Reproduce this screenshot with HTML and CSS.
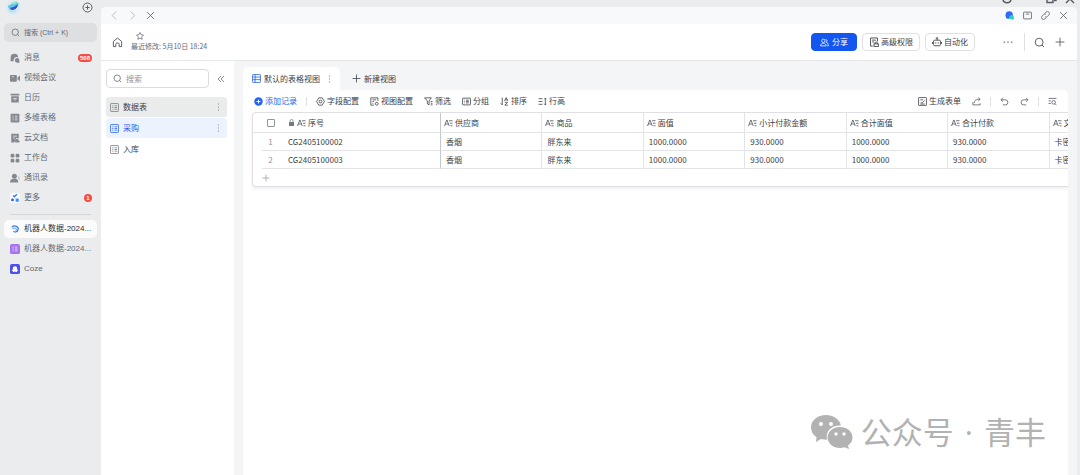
FILE: index.html
```html
<!DOCTYPE html>
<html lang="zh-CN">
<head>
<meta charset="utf-8">
<meta name="viewport" content="width=device-width, initial-scale=1">
<title>机器人数据</title>
<link rel="stylesheet" href="styles.css">
</head>
<body>
<svg class="defs" aria-hidden="true">
  <symbol id="search" viewBox="0 0 16 16"><circle cx="7.5" cy="7.5" r="5.7"/><path d="M11.7 11.7 14.5 14.5"/></symbol>
  <symbol id="plus" viewBox="0 0 16 16"><path d="M8 1v14M1 8h14"/></symbol>
  <symbol id="close" viewBox="0 0 16 16"><path d="m2 2 12 12M14 2 2 14"/></symbol>
  <symbol id="grid" viewBox="0 0 16 16"><rect x="1" y="1" width="14" height="14" rx="1"/><path d="M4 5h2M4 8h2M4 11h2M8 5h4.500M8 8h4.500M8 11h4.500"/></symbol>
  <symbol id="dots" viewBox="0 0 4 16"><path d="M1 2h2M1 8h2M1 14h2" stroke-width="2"/></symbol>
  <symbol id="text" viewBox="0 0 18 16"><path d="M1 14 5.500 2h.5L10.500 14M2.800 10h6M10 3.500h7M12 8.500h5M13 13.500h4"/></symbol>
  <symbol id="undo" viewBox="0 0 16 16"><path d="M5 1.500 2 5l3 3.500M2 5h7.500a4.500 4.500 0 0 1 0 9H5"/></symbol>
</svg>
<div class="app">
  <aside class="sidebar">
    <div class="profile">
      <svg class="avatar" viewBox="0 0 28 28"><circle cx="14" cy="14" r="14" fill="#dcebf3"/><path d="M3 11c6-1 8-6 17-8l4 4c-3 8-9 12-17 12z" fill="#65c9e6"/><path d="M8 14c5 1 9-3 14-6 0 6-4 10-10 11-3-1-4-3-4-5z" fill="#3059cf"/><path d="M3 18c5 3 11 3 17 0-1 6-12 8-17 0z" fill="#b5e0ea"/><path d="m10 7 5-4 7 1-6 4z" fill="#9de2cf"/></svg>
      <button class="icon-btn" aria-label="新建"><svg class="ic i11" viewBox="0 0 16 16"><circle cx="8" cy="8" r="6.500"/><path d="M8 5v6M5 8h6"/></svg></button>
    </div>
    <button class="side-search"><svg class="ic i9"><use href="#search"/></svg><span>搜索 (Ctrl + K)</span></button>
    <nav class="side-nav">
      <a href="#"><svg class="solid" viewBox="0 0 16 16"><path d="M7 1a6 6 0 0 0-6 6v6h5a5 5 0 0 1 7-6 6 6 0 0 0-6-6z"/><path d="M11.500 8a3.700 3.700 0 1 0 0 7.400H15v-4A3.500 3.500 0 0 0 11.500 8z"/></svg><span>消息</span><b class="badge">508</b></a>
      <a href="#"><svg class="solid" viewBox="0 0 16 16"><rect y="3" width="11" height="11" rx="1.500"/><path d="m12 7 4-3v9l-4-3z"/><path class="cut" d="M3 6h3"/></svg><span>视频会议</span></a>
      <a href="#"><svg class="solid" viewBox="0 0 16 16"><path d="M1 1h14v3H1zM2 5h12v10H2z"/><path class="cut" d="M5 9h6M8 9v3"/></svg><span>日历</span></a>
      <a href="#"><svg class="solid" viewBox="0 0 16 16"><rect x="1" y="1" width="14" height="14" rx="1.500"/><path class="cut" d="M4 5h2M4 8h2M4 11h2M8 5h4M8 8h4M8 11h4"/></svg><span>多维表格</span></a>
      <a href="#"><svg class="solid" viewBox="0 0 16 16"><path d="M2 1h12v8l-4-1-3 7H2z"/><path d="M9 15a3 3 0 0 1 1-5c2-1 3 0 4 2 2 0 2 3 0 3z"/><path class="cut" d="M5 5h6M5 8h3"/></svg><span>云文档</span></a>
      <a href="#"><svg class="solid" viewBox="0 0 16 16"><rect x="1" y="1" width="6" height="6" rx="2"/><rect x="9" y="1" width="6" height="6" rx="2"/><rect x="1" y="9" width="6" height="6" rx="2"/><rect x="9" y="9" width="6" height="6" rx="2"/></svg><span>工作台</span></a>
      <a href="#"><svg class="solid" viewBox="0 0 16 16"><circle cx="7" cy="5" r="4"/><path d="M0 15c0-4 2-6 7-6s6 2 6 6zM13 6h2v1h-2zM13 9h3v1h-3z"/></svg><span>通讯录</span></a>
      <a href="#"><svg class="more" viewBox="0 0 16 16"><rect width="16" height="16" rx="3" fill="#f8fafc"/><path d="m5 4 2 2 4-4" fill="none" stroke="#3476ef" stroke-width="2"/><circle cx="4" cy="11" r="2.300" fill="#2861ef"/><rect x="9" y="9" width="5" height="5" fill="#3b91f5"/></svg><span>更多</span><b class="badge">1</b></a>
    </nav>
    <hr class="side-rule">
    <nav class="side-nav">
      <a href="#" class="active"><svg viewBox="0 0 16 16" fill="none" stroke-width="2"><path d="M3 5c4-4 11-1 10 4s-7 4-7 2" stroke="#3671e7"/><path d="M4 8c2-2 5-2 6 0s-1 4-3 4" stroke="#8cb5f5"/></svg><span>机器人数据-2024...</span></a>
      <a href="#"><svg viewBox="0 0 16 16"><rect width="16" height="16" rx="3" fill="#a873ee"/><path d="M4 5h2M4 8h2M4 11h2M8 5h4M8 8h4M8 11h4" stroke="#ead9fc" stroke-width="1.500"/></svg><span>机器人数据-2024...</span></a>
      <a href="#"><svg viewBox="0 0 16 16"><rect width="16" height="16" rx="3" fill="#4d53e8"/><path d="M4.500 7a3.500 3.500 0 0 1 7 0v2l2 1-2 1c0 2-2 2-3.500 1-1.500 1-3.500 1-3.500-1l-2-1 2-1z" fill="#fff"/></svg><span>Coze</span></a>
    </nav>
  </aside>

  <div class="workspace">
    <div class="titlebar">
      <svg class="ic" viewBox="0 0 12 4"><path d="M2-1c0 5 8 5 8 0"/></svg>
      <svg class="ic" viewBox="0 0 12 4"><path d="M2-4v6.500h6v-7M9 .5h2v-4"/></svg>
      <svg class="ic" viewBox="0 0 12 4"><path d="m6-1-4 4M6-1l4 4"/></svg>
    </div>
    <main class="window">
      <div class="tabstrip">
        <button class="icon-btn faint" aria-label="后退"><svg class="ic i9" viewBox="0 0 16 16"><path d="m11 1-7 7 7 7"/></svg></button>
        <button class="icon-btn faint" aria-label="前进"><svg class="ic i9" viewBox="0 0 16 16"><path d="m5 1 7 7-7 7"/></svg></button>
        <button class="icon-btn" aria-label="关闭标签"><svg class="ic i9"><use href="#close"/></svg></button>
        <span class="grow"></span>
        <div class="strip-tools">
          <button class="icon-btn" aria-label="助手"><svg class="i9" viewBox="0 0 16 16"><circle cx="7.500" cy="7" r="6.500" fill="#2f6bf5"/><path d="M1 7h6v6.500H2.500z" fill="#2f6bf5"/><path d="M12 7.500a3.800 3.800 0 1 0 0 7.500h3.800v-3.700A3.700 3.700 0 0 0 12 7.500z" fill="#2fd0bd"/></svg></button>
          <button class="icon-btn" aria-label="窗口"><svg class="ic i9" viewBox="0 0 16 16"><rect x="1" y="2" width="14" height="12" rx="1"/><path d="M5 5.500h6"/></svg></button>
          <button class="icon-btn" aria-label="复制链接"><svg class="ic i9" viewBox="0 0 16 16"><path d="m7 4 2-2a3.300 3.300 0 0 1 5 5l-3 3a3.300 3.300 0 0 1-4 .5M9 12l-2 2a3.300 3.300 0 0 1-5-5l3-3a3.300 3.300 0 0 1 4-.5"/></svg></button>
          <button class="icon-btn" aria-label="关闭"><svg class="ic i9"><use href="#close"/></svg></button>
        </div>
      </div>
      <header class="doc-head">
        <button class="icon-btn" aria-label="主页"><svg class="ic i11" viewBox="0 0 16 16"><path d="M2 6.500 8 1.500l6 5V14h-3.500v-3a2.500 2.500 0 0 0-5 0v3H2z"/></svg></button>
        <div class="doc-meta">
          <button class="icon-btn" aria-label="收藏"><svg class="ic i8" viewBox="0 0 16 16"><path d="m8 1 2.200 4.400 4.800.8-3.500 3.500.8 4.900L8 12.300l-4.300 2.300.8-4.900L1 6.200l4.800-.8z"/></svg></button>
          <span>最近修改: 5月10日 18:24</span>
        </div>
        <span class="grow"></span>
        <div class="doc-buttons">
          <button class="btn primary"><svg class="ic i9" viewBox="0 0 16 16"><circle cx="6" cy="5" r="3"/><path d="M1 14c0-6 10-6 10 0zM10 2.500c3 0 3 4 1 5 2 0 3 2 4 6.500h-2"/></svg><span>分享</span></button>
          <button class="btn"><svg class="ic i10" viewBox="0 0 16 16"><path d="M13.500 7V1.500h-11v13H6M5 5h6M5 8h3"/><rect x="8" y="11" width="7" height="4"/><path d="M9.500 11V9.500c0-2 4-2 4 0V11"/></svg><span>高级权限</span></button>
          <button class="btn"><svg class="ic i10" viewBox="0 0 16 16"><rect x="2.500" y="5" width="11" height="9" rx="2"/><path d="M8 5V1.500M6 1.500h4M.8 8v3M15.200 8v3M6 8.500v2M10 8.500v2"/></svg><span>自动化</span></button>
        </div>
        <button class="icon-btn more-btn" aria-label="更多操作"><svg class="ic i10 heavy" viewBox="0 0 16 16"><path d="M1 8h2M7 8h2M13 8h2"/></svg></button>
        <i class="vr"></i>
        <div class="head-tools">
          <button class="icon-btn" aria-label="查找"><svg class="ic i11"><use href="#search"/></svg></button>
          <button class="icon-btn" aria-label="添加"><svg class="ic i10"><use href="#plus"/></svg></button>
        </div>
      </header>
      <div class="body">
        <section class="tables">
          <div class="tables-top">
            <label class="find"><svg class="ic i9"><use href="#search"/></svg><input type="text" placeholder="搜索" aria-label="搜索"></label>
            <button class="icon-btn" aria-label="收起"><svg class="ic i8" viewBox="0 0 16 16"><path d="M8 2 2 8l6 6M14 2 8 8l6 6"/></svg></button>
          </div>
          <nav class="table-list">
            <a href="#" class="hover"><svg class="ic i9"><use href="#grid"/></svg><span>数据表</span><svg class="ic kebab"><use href="#dots"/></svg></a>
            <a href="#" class="current"><svg class="ic i9"><use href="#grid"/></svg><span>采购</span><svg class="ic kebab"><use href="#dots"/></svg></a>
            <a href="#"><svg class="ic i9"><use href="#grid"/></svg><span>入库</span></a>
          </nav>
        </section>
        <section class="content">
          <div class="views">
            <button class="view current"><svg class="ic i9 blue" viewBox="0 0 16 16"><rect x="1" y="1" width="14" height="14" rx="1"/><path d="M1 5.500h14M1 10h14M5.500 1v14"/></svg><span>默认的表格视图</span><svg class="ic kebab"><use href="#dots"/></svg></button>
            <button class="view"><svg class="ic i9"><use href="#plus"/></svg><span>新建视图</span></button>
          </div>
          <div class="sheet">
            <div class="toolbar">
              <button class="tool blue"><svg class="i9" viewBox="0 0 16 16"><circle cx="8" cy="8" r="7.500" fill="#2462f0"/><path d="M8 4.500v7M4.500 8h7" stroke="#fff" stroke-width="1.600"/></svg>添加记录</button>
              <i class="vr"></i>
              <button class="tool"><svg class="ic i9" viewBox="0 0 16 16"><path d="m5 1.500h6L15 8l-4 6.500H5L1 8z"/><circle cx="8" cy="8" r="2.500"/></svg>字段配置</button>
              <button class="tool"><svg class="ic i9" viewBox="0 0 16 16"><path d="M14 7V1.500H1.500v13H7M4.500 5H11M4.500 8H7M4.500 11H6"/><circle cx="12" cy="12" r="2.500"/></svg>视图配置</button>
              <button class="tool"><svg class="ic i9" viewBox="0 0 16 16"><path d="M1 1.500h12L9 7v7l-3-2V7zM12 8h3M12 11h3M12 14h3"/></svg>筛选</button>
              <button class="tool"><svg class="ic i9" viewBox="0 0 16 16"><rect x="1" y="2" width="14" height="12" rx="1"/><path d="M4 5.500h1M4 8h1M4 10.500h1M7 5.500h5M7 8h5M7 10.500h5"/></svg>分组</button>
              <button class="tool"><svg class="ic i9" viewBox="0 0 16 16"><path d="M4 1v13l-3-3M8 7l3-6 3 6M9 5h4M8.500 9.500h5l-5 5h5.500"/></svg>排序</button>
              <button class="tool"><svg class="ic i9" viewBox="0 0 16 16"><path d="M1 3h7M1 8h7M1 13h7M13 2v12M11 4l2-2 2 2M11 12l2 2 2-2"/></svg>行高</button>
              <span class="grow"></span>
              <div class="tool-right">
                <button class="tool spaced"><svg class="ic i9" viewBox="0 0 16 16"><rect x="1" y="1" width="14" height="14" rx="1"/><path d="M4 5h5M5 9l2 2 5-5M4 12.500h8"/></svg>生成表单</button>
                <button class="icon-btn" aria-label="分享视图"><svg class="ic i9" viewBox="0 0 16 16"><path d="M1.500 9v5h13v-3M4 11c0-5 3-7 10-7M11 1l3.500 3L11 7"/></svg></button>
                <i class="vr"></i>
                <button class="icon-btn spaced" aria-label="撤销"><svg class="ic i9"><use href="#undo"/></svg></button>
                <button class="icon-btn" aria-label="重做"><svg class="ic i9 flip"><use href="#undo"/></svg></button>
                <i class="vr"></i>
                <button class="icon-btn" aria-label="查找记录"><svg class="ic i9" viewBox="0 0 16 16"><path d="M1 2.500h14M1 7h4M1 11.500h4"/><circle cx="10" cy="9.500" r="3.200"/><path d="m12.500 12 2.500 2.500"/></svg></button>
              </div>
            </div>
            <div class="grid-wrap">
              <table class="records">
                <colgroup><col class="c-num"><col class="c-key"><col><col><col><col><col><col><col></colgroup>
                <thead>
                  <tr>
                    <th class="num"><input type="checkbox" aria-label="全选"></th>
                    <th class="key"><div class="th"><svg class="lock" viewBox="0 0 12 14"><rect x="1" y="6" width="10" height="8" rx="1" fill="#74797f"/><path d="M3 6V4a3 3 0 0 1 6 0v2" fill="none" stroke="#74797f" stroke-width="1.500"/></svg><svg class="ic tx"><use href="#text"/></svg>序号</div></th>
                    <th><div class="th"><svg class="ic tx"><use href="#text"/></svg>供应商</div></th>
                    <th><div class="th"><svg class="ic tx"><use href="#text"/></svg>商品</div></th>
                    <th><div class="th"><svg class="ic tx"><use href="#text"/></svg>面值</div></th>
                    <th><div class="th"><svg class="ic tx"><use href="#text"/></svg>小计付款金额</div></th>
                    <th><div class="th"><svg class="ic tx"><use href="#text"/></svg>合计面值</div></th>
                    <th><div class="th"><svg class="ic tx"><use href="#text"/></svg>合计付款</div></th>
                    <th><div class="th"><svg class="ic tx"><use href="#text"/></svg>文</div></th>
                  </tr>
                </thead>
                <tbody>
                  <tr><td class="num">1</td><td class="key">CG2405100002</td><td>香烟</td><td>胖东来</td><td>1000.0000</td><td>930.0000</td><td>1000.0000</td><td>930.0000</td><td>卡密</td></tr>
                  <tr><td class="num">2</td><td class="key">CG2405100003</td><td>香烟</td><td>胖东来</td><td>1000.0000</td><td>930.0000</td><td>1000.0000</td><td>930.0000</td><td>卡密</td></tr>
                </tbody>
              </table>
              <button class="add-row" aria-label="添加一行"><svg class="ic i8"><use href="#plus"/></svg></button>
            </div>
          </div>
        </section>
      </div>
    </main>
  </div>
</div>
<div class="watermark">
  <svg viewBox="0 0 42 34"><path d="M15 0C6.500 0 0 5.500 0 12.500c0 4 2 7.300 5.500 9.500L5 27l5-3c2 .6 4 .8 6 .8C14 16 21 10 30 10.500 28.500 4.500 22.500 0 15 0z"/><path d="M29 12c-7 0-12.500 4.700-12.500 10.500S22 33 29 33c1.500 0 3-.2 4.500-.7L38 34l-1-3.500c3-2 4.500-4.800 4.500-8C41.500 16.700 36 12 29 12z"/><g fill="#fff"><circle cx="10" cy="9" r="2"/><circle cx="20" cy="9" r="2"/><circle cx="25" cy="19" r="1.700"/><circle cx="33" cy="19" r="1.700"/></g></svg>
  <div class="account"><span>公众号</span><span>·</span><span>青丰</span></div>
</div>
</body>
</html>
```
FILE: styles.css
```css
* { box-sizing: border-box; }
body {
  margin: 0;
  font: 8px/12px "Noto Sans CJK SC", "Noto Sans", sans-serif;
  color: #3c4046;
  background: #ebecee;
}
button, input { font: inherit; color: inherit; }
button { border: 0; padding: 0; background: none; white-space: nowrap; }
a { color: inherit; text-decoration: none; }
svg { display: block; flex: none; }
.defs { position: absolute; width: 0; height: 0; }

.ic { fill: none; stroke: currentColor; stroke-width: 1.4; overflow: hidden; }
.heavy { stroke-width: 2; }
.i8 { width: 8px; height: 8px; }
.i9 { width: 9px; height: 9px; }
.i10 { width: 10px; height: 10px; }
.i11 { width: 11px; height: 11px; }
.flip { transform: scaleX(-1); }
.kebab { width: 3px; height: 8px; color: #7f858e; }
.grow { flex: 1; }
.vr { width: 1px; height: 9px; background: #dee0e3; }
.blue { color: #2462f0; }
.icon-btn { display: flex; color: #565b63; }
.faint { color: #a9adb3; }

.app { display: flex; min-height: 100vh; }

.sidebar { flex: none; width: 101px; padding: 0 4px; color: #646a73; font-family: "Liberation Sans", "Noto Sans CJK SC", sans-serif; }
.profile { display: flex; justify-content: space-between; align-items: center; height: 15px; padding: 0 4px 0 2px; }
.avatar { width: 15px; height: 15px; }
.side-search {
  display: flex; align-items: center; gap: 4px;
  width: 100%; height: 19px; margin: 8px 0 7px; padding: 0 7px;
  border-radius: 5px; background: #dedfe1; font-size: 7px;
}
.side-nav { display: flex; flex-direction: column; gap: 2px; }
.side-nav a { display: flex; align-items: center; gap: 4px; height: 18px; padding: 0 5px 0 6px; border-radius: 5px; white-space: nowrap; }
.side-nav svg { width: 10px; height: 10px; }
.side-nav .active { background: #fbfbfb; color: #2b2f36; }
.solid { fill: #85898f; }
.cut { stroke: #ebecee; stroke-width: 1.300; fill: none; }
.badge { min-width: 8px; margin-left: auto; padding: 0 2px; border-radius: 4px; background: #f54a45; color: #fff; font-size: 6px; line-height: 8px; text-align: center; }
.side-rule { margin: 7px 6px 5px; border: 0; border-top: 1px solid #d5d6d9; }

.workspace { flex: 1; min-width: 0; display: flex; flex-direction: column; padding-right: 3px; }
.titlebar { display: flex; justify-content: flex-end; gap: 7px; height: 7px; padding-right: 1px; color: #565b63; }
.titlebar svg { width: 12px; height: 4px; }
.titlebar svg:first-child { margin-right: 25px; }
.window { flex: 1; display: flex; flex-direction: column; border-radius: 5px 5px 0 0; background: #fff; overflow: hidden; }
.tabstrip { display: flex; align-items: center; gap: 9px; height: 17px; padding: 0 9px; background: #f8f9fa; }
.strip-tools { display: flex; gap: 9px; }

.doc-head { display: flex; align-items: center; height: 37px; padding: 0 12px 0 11px; border-bottom: 1px solid #e5e6e8; }
.doc-meta { display: flex; flex-direction: column; gap: 1px; margin-left: 8px; font-size: 7px; line-height: 11px; color: #646a73; }
.doc-meta .icon-btn { margin-left: 5px; }
.doc-buttons { display: flex; gap: 5px; }
.btn { display: flex; align-items: center; gap: 2px; height: 18px; padding: 0 6px; border: 1px solid #dee0e3; border-radius: 4px; }
.primary { padding: 0 8px; gap: 3px; border-color: #1456f0; background: #1456f0; color: #fff; }
.more-btn { margin: 0 11px 0 28px; }
.doc-head .vr { height: 18px; }
.head-tools { display: flex; align-items: center; gap: 10px; margin-left: 9px; }

.body { flex: 1; display: flex; min-height: 0; }
.tables { flex: none; width: 133px; padding: 8px 7px 0 5px; }
.tables-top { display: flex; align-items: center; justify-content: space-between; padding-right: 2px; }
.find { display: flex; align-items: center; gap: 4px; width: 103px; height: 19px; padding: 0 6px; border: 1px solid #d9dbde; border-radius: 4px; color: #646a73; }
.find input { flex: 1; min-width: 0; padding: 0; border: 0; outline: 0; background: none; }
.find input::placeholder { color: #8f959e; opacity: 1; }
.table-list { display: flex; flex-direction: column; gap: 1px; margin-top: 9px; }
.table-list a { display: flex; align-items: center; gap: 4px; height: 20px; padding: 0 7px 0 4px; border-radius: 3px; }
.table-list span { flex: 1; }
.table-list .i9 { color: #74797f; }
.table-list .hover { background: #eaebeb; }
.table-list .current { background: #edf2ff; }
.table-list .current span, .table-list .current .i9 { color: #2462f0; }

.content { flex: 1; min-width: 0; display: flex; flex-direction: column; padding: 6px 9px 0; background: #f4f5f7; }
.views { display: flex; }
.view { display: flex; align-items: center; gap: 3px; height: 23px; padding: 0 12px; border-radius: 5px 5px 0 0; }
.view.current { padding: 0 9px; background: #fff; }
.view .kebab { margin-left: 5px; }
.sheet { flex: 1; border-radius: 0 5px 0 0; background: #fff; padding-left: 9px; overflow: hidden; }
.toolbar { display: flex; align-items: center; gap: 11px; height: 22px; padding: 0 11px 0 2px; }
.tool { display: flex; align-items: center; gap: 2px; }
.toolbar > .vr { margin: 0 -2px; }
.tool-right { display: flex; align-items: center; gap: 9px; }
.spaced { margin-right: 2px; }

.grid-wrap { border: 1px solid #dee0e3; border-right: 0; border-radius: 4px 0 0 4px; box-shadow: 0 2px 3px #1f232914; overflow: hidden; }
.records { width: 898px; table-layout: fixed; border-collapse: separate; border-spacing: 0; }
.c-num { width: 35px; }
.c-key { width: 153px; }
th, td { height: 18px; padding: 0 4px; border-right: 1px solid #e2e4e6; border-bottom: 1px solid #e2e4e6; font-weight: 400; text-align: left; white-space: nowrap; }
th { height: 20px; padding: 0 3px; }
td { padding-left: 5px; }
td.key, th.key { padding-left: 0; border-right-color: #c4c8ce; }
th.num, td.num { padding: 0; border-right: 0; text-align: center; color: #8f959e; }
td.num { border-bottom: 0; background: linear-gradient(#e2e4e6, #e2e4e6) right bottom / 26px 1px no-repeat; }
.th { display: flex; align-items: center; gap: 2px; }
.tx { width: 9px; height: 8px; color: #4b5058; stroke-width: 1.6; }
.lock { width: 7px; height: 7px; }
th input { appearance: none; display: block; width: 8px; height: 8px; margin: 0 auto; border: 1px solid #8f959e; border-radius: 1px; background: #fff; }
.add-row { display: flex; align-items: center; width: 100%; height: 17px; padding: 0 9px; color: #8f959e; }

.watermark { position: absolute; right: 34px; bottom: 23px; display: flex; align-items: center; gap: 8px; color: #b2b2b2; font-size: 31px; line-height: 40px; white-space: nowrap; }
.watermark svg { width: 42px; height: 34px; fill: #b2b2b2; }
.account { display: flex; gap: 11px; font-family: "Open Sans", "Noto Sans CJK SC", sans-serif; }
```
